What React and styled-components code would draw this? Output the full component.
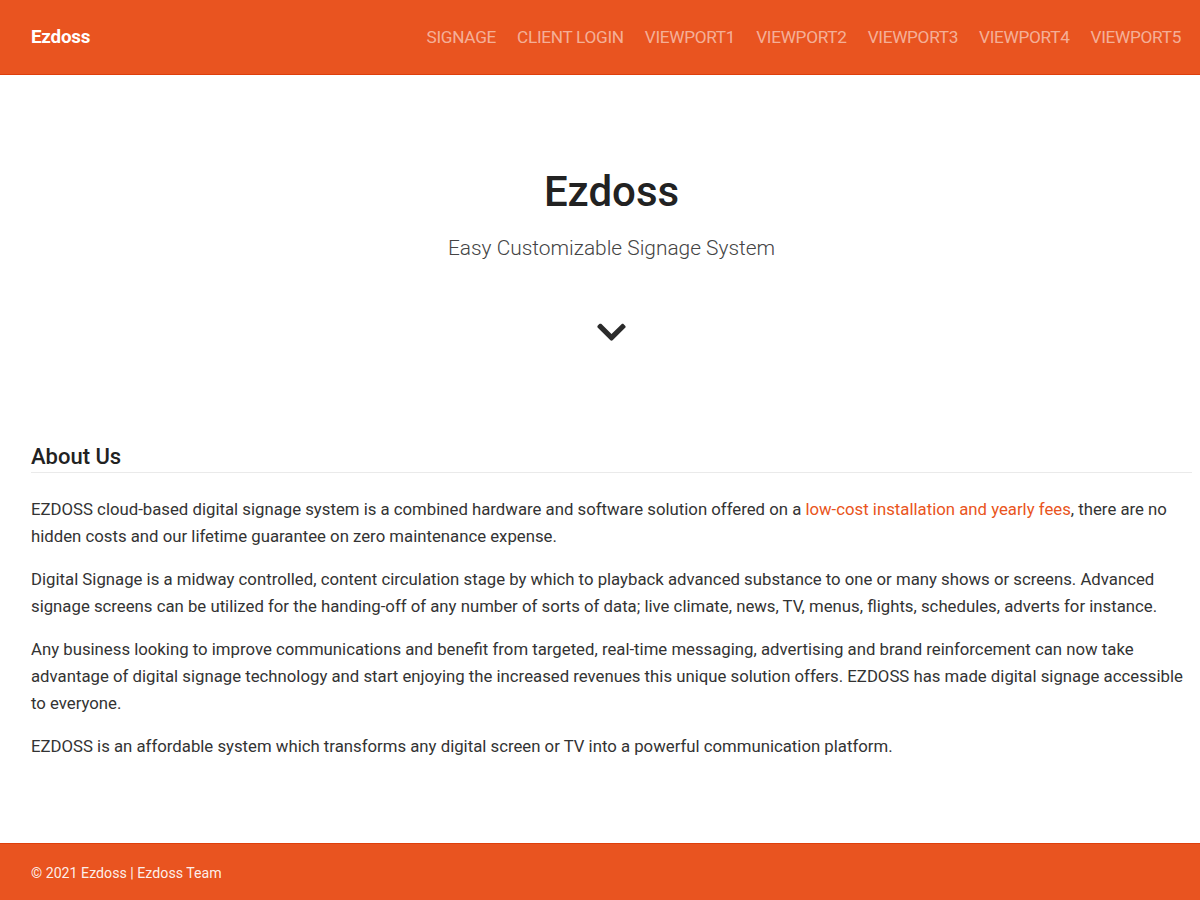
import React from "react";
import styled, { createGlobalStyle } from "styled-components";

const GlobalStyle = createGlobalStyle`
  html, body {
    margin: 0;
    padding: 0;
    background: #fff;
  }
  body {
    font-family: Roboto, "Liberation Sans", Arial, sans-serif;
    color: #333;
  }
  * {
    box-sizing: border-box;
  }
`;

const Page = styled.div`
  display: flex;
  flex-direction: column;
  min-height: 900px;
`;

const Navbar = styled.nav`
  height: 75px;
  background: #e95420;
  border-bottom: 1px solid #de3f0c;
  display: flex;
  align-items: center;
  justify-content: space-between;
  padding: 0 19px 0 31px;
`;

const Brand = styled.a`
  color: #fff;
  font-size: 18.8px;
  font-weight: 700;
  text-decoration: none;
  letter-spacing: -0.2px;
`;

const NavList = styled.ul`
  display: flex;
  list-style: none;
  margin: 0;
  padding: 0;
  gap: 21px;
`;

const NavLink = styled.a`
  color: rgba(255, 255, 255, 0.55);
  font-size: 17.2px;
  text-transform: uppercase;
  text-decoration: none;
  letter-spacing: -0.3px;
`;

const Main = styled.main`
  flex: 1;
  padding: 0 8px 60px 31px;
`;

const Hero = styled.header`
  display: flex;
  flex-direction: column;
  align-items: center;
  padding: 92px 0 0;
  height: 369px;
`;

const Title = styled.h1`
  margin: 0;
  font-size: 42px;
  font-weight: 500;
  color: #222;
  line-height: 50px;
`;

const Subtitle = styled.p`
  margin: 19px 0 0;
  font-size: 20.9px;
  font-weight: 300;
  color: #444;
`;

const Chevron = styled.svg`
  margin-top: 61px;
  width: 29px;
  height: 22px;
  fill: #2b2b2b;
`;

const SectionTitle = styled.h2`
  margin: 0 0 23px;
  padding-bottom: 2px;
  font-size: 22px;
  font-weight: 500;
  color: #222;
  border-bottom: 1px solid #eaeaea;
  line-height: 26px;
`;

const Paragraph = styled.p`
  margin: 0 0 16px;
  font-size: 16.75px;
  line-height: 27px;
  color: #333;
`;

const Accent = styled.a`
  color: #e95420;
  text-decoration: none;
`;

const Footer = styled.footer`
  height: 57px;
  background: #e95420;
  border-top: 1px solid #de3f0c;
  display: flex;
  align-items: center;
  padding: 2px 31px 0;
  color: rgba(255, 255, 255, 0.92);
  font-size: 14.2px;
`;

const links = [
  "Signage",
  "Client Login",
  "Viewport1",
  "Viewport2",
  "Viewport3",
  "Viewport4",
  "Viewport5",
];

const App = () => {
  return (
    <Page>
      <GlobalStyle />
      <Navbar>
        <Brand href="#">Ezdoss</Brand>
        <NavList>
          {links.map((l) => (
            <li key={l}>
              <NavLink href="#">{l}</NavLink>
            </li>
          ))}
        </NavList>
      </Navbar>

      <Main>
        <Hero>
          <Title>Ezdoss</Title>
          <Subtitle>Easy Customizable Signage System</Subtitle>
          <Chevron viewBox="0 0 448 300">
            <path d="M207.029 278.951L12.686 84.607c-9.373-9.373-9.373-24.569 0-33.941l22.667-22.667c9.357-9.357 24.522-9.375 33.901-.04L224 182.745 378.745 28.96c9.379-9.335 24.544-9.317 33.901.04l22.667 22.667c9.373 9.373 9.373 24.569 0 33.941L240.971 278.951c-9.373 9.372-24.569 9.372-33.942 0z" />
          </Chevron>
        </Hero>

        <section>
          <SectionTitle>About Us</SectionTitle>
          <Paragraph>
            EZDOSS cloud-based digital signage system is a combined hardware
            and software solution offered on a{" "}
            <Accent href="#">low-cost installation and yearly fees</Accent>,
            there are no hidden costs and our lifetime guarantee on zero
            maintenance expense.
          </Paragraph>
          <Paragraph>
            Digital Signage is a midway controlled, content circulation stage by
            which to playback advanced substance to one or many shows or
            screens. Advanced signage screens can be utilized for the
            handing-off of any number of sorts of data; live climate, news, TV,
            menus, flights, schedules, adverts for instance.
          </Paragraph>
          <Paragraph>
            Any business looking to improve communications and benefit from
            targeted, real-time messaging, advertising and brand reinforcement
            can now take advantage of digital signage technology and start
            enjoying the increased revenues this unique solution offers. EZDOSS
            has made digital signage accessible to everyone.
          </Paragraph>
          <Paragraph>
            EZDOSS is an affordable system which transforms any digital screen
            or TV into a powerful communication platform.
          </Paragraph>
        </section>
      </Main>

      <Footer>© 2021 Ezdoss | Ezdoss Team</Footer>
    </Page>
  );
};

export default App;
